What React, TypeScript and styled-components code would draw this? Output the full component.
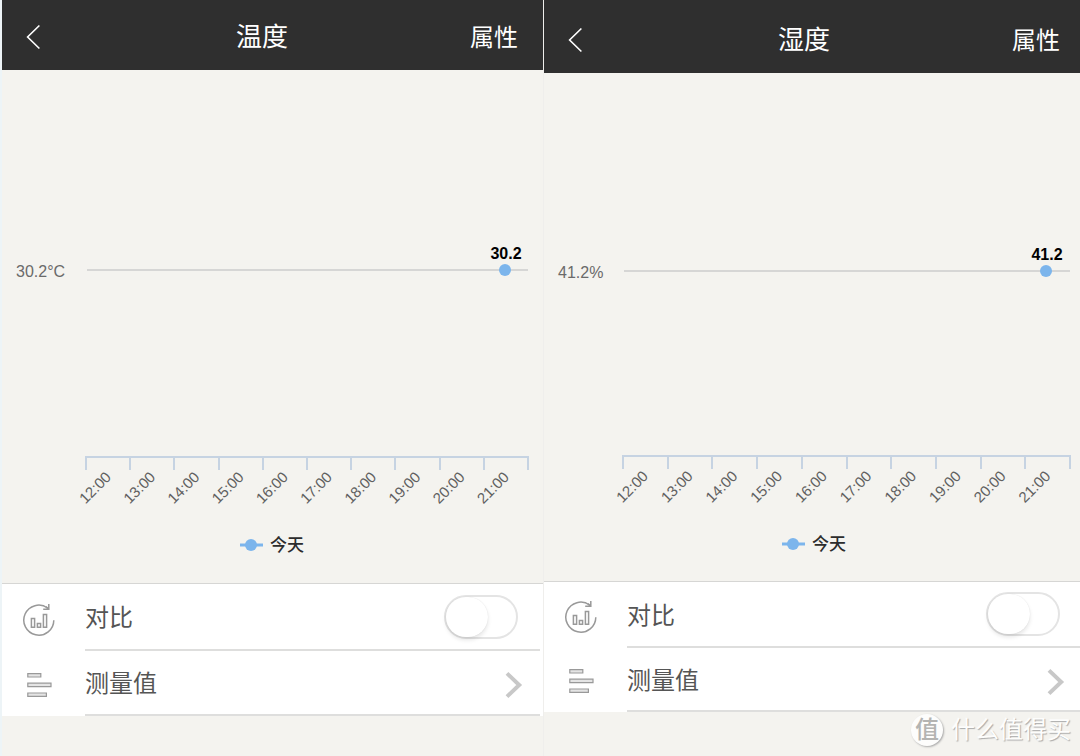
import React, { useId, useState } from "react";
import styled, { createGlobalStyle } from "styled-components";

const GlobalStyle = createGlobalStyle`
  *, *::before, *::after { box-sizing: border-box; }
  body {
    margin: 0;
    background: #f4f3ef;
    font-family: "Liberation Sans", "Noto Sans CJK SC", sans-serif;
  }
  button { font: inherit; }
`;

const Page = styled.main`
  position: relative;
  display: grid;
  grid-template-columns: 541fr 536fr;
  column-gap: 1px;
  min-height: 100vh;
  padding-left: 2px;
  background: linear-gradient(to right, #edf4f7 2px, #efeeec 2px);
`;

const Panel = styled.section`
  display: flex;
  flex-direction: column;
  min-width: 0;
  background: #f4f3ef;
`;

const Header = styled.header<{ $height: number; $drop: number; $end: number }>`
  display: flex;
  align-items: center;
  justify-content: space-between;
  height: ${(p) => p.$height}px;
  padding: ${(p) => p.$drop}px ${(p) => p.$end}px 0 24px;
  background: #2f2f2f;
  color: #fff;
`;

const BackButton = styled.button`
  display: flex;
  width: 28px;
  padding: 0;
  border: 0;
  background: none;
  color: inherit;
  cursor: pointer;
`;

const Title = styled.h1`
  margin: 0;
  font-size: 26px;
  line-height: 36px;
  font-weight: 400;
`;

const HeaderAction = styled.button`
  padding: 3px 0 0;
  border: 0;
  background: none;
  color: inherit;
  font-size: 24px;
  line-height: 36px;
  cursor: pointer;
`;

const ChartSvg = styled.svg`
  display: block;
  width: 100%;
  height: auto;
`;

const AxisText = styled.text`
  font-size: 16px;
  fill: #6a6a6a;
`;

const TickText = styled.text`
  font-size: 15px;
  fill: #606060;
  text-anchor: end;
`;

const PointText = styled.text`
  font-size: 16px;
  font-weight: 700;
  fill: #000;
  text-anchor: middle;
`;

const LegendText = styled.text`
  font-size: 17px;
  font-weight: 500;
  fill: #2c2c2c;
`;

const Settings = styled.div<{ $inset: number }>`
  border-top: 1px solid #d6d6d4;
  padding-right: ${(p) => p.$inset}px;
  background: #fff;
`;

const Row = styled.div<{ $height: number }>`
  display: grid;
  grid-template-columns: 83px 1fr;
  height: ${(p) => p.$height}px;
`;

const IconCell = styled.div`
  display: flex;
  align-items: center;
  padding: 4px 0 0 20px;
`;

const RowBody = styled.div<{ $end: number }>`
  display: flex;
  align-items: center;
  justify-content: space-between;
  padding-right: ${(p) => p.$end}px;
  border-bottom: 2px solid #dededd;
`;

const RowLabel = styled.label`
  padding-top: 3px;
  color: #555;
  font-size: 24px;
  line-height: 36px;
`;

const LinkRow = styled.button`
  display: flex;
  flex: 1;
  align-items: center;
  justify-content: space-between;
  padding: 3px 0 0;
  border: 0;
  background: none;
  color: #555;
  font-size: 24px;
  line-height: 36px;
  cursor: pointer;

  svg { margin-top: 2px; }
`;

const Switch = styled.input`
  appearance: none;
  display: flex;
  width: 74px;
  height: 44px;
  margin: 0;
  border: 2px solid #e4e4e4;
  border-radius: 22px;
  background: #fff;
  cursor: pointer;

  &::before {
    content: "";
    width: 42px;
    height: 40px;
    border-radius: 21px;
    background: #fff;
    box-shadow: 0 3px 4px rgba(0, 0, 0, 0.1), 0 0 1px rgba(0, 0, 0, 0.12);
  }

  &:checked {
    justify-content: flex-end;
    border-color: #7cb5ec;
    background: #7cb5ec;
  }
`;

const Watermark = styled.div`
  position: absolute;
  right: 9px;
  bottom: 8px;
  display: flex;
  align-items: center;
  gap: 8px;
  color: #fdfdfc;
  font-size: 24px;
  line-height: 36px;
  text-shadow: 1px 1px 1px #aaa;
`;

const WatermarkBadge = styled.span`
  display: grid;
  place-items: center;
  width: 32px;
  height: 32px;
  border-radius: 50%;
  background: #fdfdfc;
  box-shadow: 1px 1px 2px #aaa;
  color: #b4b4b2;
  font-size: 24px;
  font-weight: 500;
  line-height: 32px;
  text-shadow: none;
`;

const BackIcon = () => (
  <svg width="16" height="26" viewBox="0 0 16 26" fill="none" stroke="#fff" strokeWidth="1.6" aria-hidden="true">
    <path d="M13.4 1.5 L1.6 13 L13.4 24.5" />
  </svg>
);

const CompareIcon = () => (
  <svg width="34" height="34" viewBox="0 0 34 34" fill="none" stroke="#999" strokeWidth="1.5" aria-hidden="true">
    <path d="M31.8 17.2 A15 15 0 1 1 25.6 5" />
    <path d="M26.8 1 V6.2 H21.2 M26.8 6.2 L24 3.6" />
    <path d="M9.4 15.4 h3.2 v8.8 h-3.2z M15.4 20.6 h3.2 v3.6 h-3.2z M21.4 11.4 h3.2 v12.8 h-3.2z" />
  </svg>
);

const ListIcon = () => (
  <svg width="34" height="34" viewBox="0 0 34 34" fill="#e4e4e4" stroke="#999" strokeWidth="1.2" aria-hidden="true">
    <path d="M5.8 4.6 h13 v3.4 h-13z M5.8 14.2 h23.2 v3.4 h-23.2z M5.8 24 h18.6 v3.4 h-18.6z" />
  </svg>
);

const ChevronIcon = () => (
  <svg width="18" height="28" viewBox="0 0 18 28" fill="none" stroke="#c8c8c8" strokeWidth="4" aria-hidden="true">
    <path d="M2 2.4 L14.2 14 L2 25.6" />
  </svg>
);

const HOURS = ["12:00", "13:00", "14:00", "15:00", "16:00", "17:00", "18:00", "19:00", "20:00", "21:00"];

interface ChartSpec {
  width: number;
  height: number;
  name: string;
  value: string;
  unit: string;
  valueY: number;
  lineStart: number;
  axisStart: number;
  axisEnd: number;
  axisY: number;
  pointX: number;
}

const Chart = ({ width, height, name, value, unit, valueY, lineStart, axisStart, axisEnd, axisY, pointX }: ChartSpec) => {
  const step = (axisEnd - axisStart) / HOURS.length;
  const legendY = axisY + 88;
  return (
    <ChartSvg viewBox={`0 0 ${width} ${height}`} role="img" aria-label={name}>
      <AxisText x={14} y={valueY + 7}>{value + unit}</AxisText>
      <path d={`M${lineStart} ${valueY} H${axisEnd}`} stroke="#d6d6d5" strokeWidth="2" />
      <circle cx={pointX} cy={valueY} r="6" fill="#7cb5ec" />
      <PointText x={pointX + 1} y={valueY - 11}>{value}</PointText>
      <path d={`M${axisStart} ${axisY} H${axisEnd}`} stroke="#c6d3e2" strokeWidth="2" />
      {[...HOURS, ""].map((_, i) => {
        const x = Math.round(axisStart + i * step);
        return <path key={i} d={`M${x} ${axisY - 1} V${axisY + 13}`} stroke="#c6d3e2" strokeWidth="2" />;
      })}
      {HOURS.map((hour, i) => (
        <TickText key={hour} transform={`translate(${axisStart + 26 + i * step} ${axisY + 21}) rotate(-45)`}>
          {hour}
        </TickText>
      ))}
      <path d={`M238 ${legendY} h23`} stroke="#7cb5ec" strokeWidth="3" />
      <circle cx={249} cy={legendY} r="6" fill="#7cb5ec" />
      <LegendText x={268} y={legendY + 6}>今天</LegendText>
    </ChartSvg>
  );
};

interface SensorProps {
  chart: ChartSpec;
  headerHeight: number;
  headerDrop: number;
  headerEnd: number;
  rowHeights: [number, number];
  rowEnd: number;
  inset: number;
}

const SensorPanel = ({ chart, headerHeight, headerDrop, headerEnd, rowHeights, rowEnd, inset }: SensorProps) => {
  const id = useId();
  const [compare, setCompare] = useState(false);
  return (
    <Panel>
      <Header $height={headerHeight} $drop={headerDrop} $end={headerEnd}>
        <BackButton aria-label="返回"><BackIcon /></BackButton>
        <Title>{chart.name}</Title>
        <HeaderAction>属性</HeaderAction>
      </Header>
      <Chart {...chart} />
      <Settings $inset={inset}>
        <Row $height={rowHeights[0]}>
          <IconCell><CompareIcon /></IconCell>
          <RowBody $end={rowEnd}>
            <RowLabel htmlFor={id}>对比</RowLabel>
            <Switch id={id} type="checkbox" checked={compare} onChange={(e) => setCompare(e.target.checked)} />
          </RowBody>
        </Row>
        <Row $height={rowHeights[1]}>
          <IconCell><ListIcon /></IconCell>
          <RowBody $end={rowEnd - 5}>
            <LinkRow>测量值<ChevronIcon /></LinkRow>
          </RowBody>
        </Row>
      </Settings>
    </Panel>
  );
};

const temperature: ChartSpec = {
  width: 541, height: 513, name: "温度", value: "30.2", unit: "°C",
  valueY: 200, lineStart: 85, axisStart: 84, axisEnd: 526, axisY: 387, pointX: 503,
};

const humidity: ChartSpec = {
  width: 536, height: 508, name: "湿度", value: "41.2", unit: "%",
  valueY: 198, lineStart: 80, axisStart: 79, axisEnd: 526, axisY: 383, pointX: 502,
};

export default function App() {
  return (
    <>
      <GlobalStyle />
      <Page>
        <SensorPanel
          chart={temperature}
          headerHeight={70}
          headerDrop={3}
          headerEnd={25}
          rowHeights={[67, 65]}
          rowEnd={22}
          inset={3}
        />
        <SensorPanel
          chart={humidity}
          headerHeight={73}
          headerDrop={6}
          headerEnd={20}
          rowHeights={[66, 64]}
          rowEnd={20}
          inset={0}
        />
        <Watermark>
          <WatermarkBadge>值</WatermarkBadge>
          什么值得买
        </Watermark>
      </Page>
    </>
  );
}
